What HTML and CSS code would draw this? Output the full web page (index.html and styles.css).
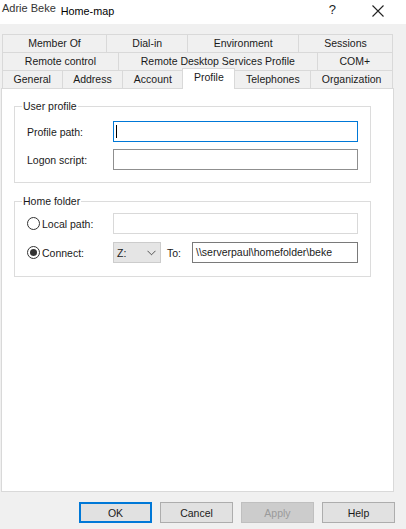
FILE: index.html
```html
<!DOCTYPE html>
<html lang="en">
<head>
<meta charset="utf-8">
<title>Adrie Beke Properties</title>
<link rel="stylesheet" href="styles.css">
</head>
<body>
<div class="window">
  <header class="titlebar">
    <div class="title"><span class="title-old">Adrie Beke</span><span class="title-new">Home-map</span></div>
    <div class="caption-btns">
      <span class="help-btn">?</span>
      <span class="close-btn"><svg width="12" height="12" viewBox="0 0 12 12"><path d="M0.5 0.5L11.5 11.5M11.5 0.5L0.5 11.5" stroke="#222" stroke-width="1.1" fill="none"/></svg></span>
    </div>
  </header>
  <main class="dialog">
    <nav class="tabs">
      <div class="tab-row">
        <div class="tab">Member Of</div>
        <div class="tab">Dial-in</div>
        <div class="tab">Environment</div>
        <div class="tab">Sessions</div>
      </div>
      <div class="tab-row">
        <div class="tab">Remote control</div>
        <div class="tab">Remote Desktop Services Profile</div>
        <div class="tab">COM+</div>
      </div>
      <div class="tab-row">
        <div class="tab">General</div>
        <div class="tab">Address</div>
        <div class="tab">Account</div>
        <div class="tab selected">Profile</div>
        <div class="tab">Telephones</div>
        <div class="tab">Organization</div>
      </div>
    </nav>
    <section class="panel">
      <fieldset class="group group-profile">
        <legend>User profile</legend>
        <div class="form-grid">
          <label class="field-label">Profile path:</label>
          <div class="textbox focused"><span class="caret"></span></div>
          <label class="field-label">Logon script:</label>
          <div class="textbox"></div>
        </div>
      </fieldset>
      <fieldset class="group group-home">
        <legend>Home folder</legend>
        <div class="form-grid form-grid-home">
          <label class="field-label radio"><span class="radio-circle"></span>Local path:</label>
          <div class="textbox disabled"></div>
          <label class="field-label radio"><span class="radio-circle checked"></span>Connect:</label>
          <div class="connect-row">
            <div class="combo"><span>Z:</span><svg width="9" height="6" viewBox="0 0 9 6"><polyline points="0.5,0.8 4.5,4.8 8.5,0.8" fill="none" stroke="#555" stroke-width="1"/></svg></div>
            <span class="to-label">To:</span>
            <div class="textbox path">\\serverpaul\homefolder\beke</div>
          </div>
        </div>
      </fieldset>
    </section>
    <footer class="buttons">
      <button class="btn default">OK</button>
      <button class="btn">Cancel</button>
      <button class="btn" disabled>Apply</button>
      <button class="btn">Help</button>
    </footer>
  </main>
</div>
</body>
</html>
```

FILE: styles.css
```css
* { box-sizing: border-box; }

html, body {
  margin: 0;
  padding: 0;
}

body {
  width: 406px;
  height: 529px;
  overflow: hidden;
  background: #f0f0f0;
  font-family: "Liberation Sans", Arial, sans-serif;
  font-size: 10.5px;
  color: #1a1a1a;
}

.titlebar {
  height: 24px;
  background: #ffffff;
  display: flex;
  justify-content: space-between;
  align-items: flex-start;
}

.title {
  display: flex;
  align-items: flex-start;
  padding-left: 2px;
}

.title-old {
  font-size: 11px;
  line-height: 13px;
  padding-top: 2px;
  color: #333;
}

.title-new {
  font-size: 10.8px;
  line-height: 13px;
  padding-top: 5px;
  margin-left: 5px;
  color: #000;
}

.caption-btns {
  display: flex;
  align-items: flex-start;
  padding-top: 3px;
  padding-right: 22px;
}

.help-btn {
  font-size: 13px;
  line-height: 13px;
  color: #222;
  margin-right: 36px;
}

.close-btn {
  display: flex;
  padding-top: 2px;
}

.dialog {
  padding: 10px 12px 0 1px;
}

.tabs {
  margin: 0 1px 0 1px;
}

.tab-row {
  display: flex;
  height: 18px;
}

.tab {
  flex: 1 1 auto;
  height: 18px;
  border-top: 1px solid #d9d9d9;
  border-left: 1px solid #d9d9d9;
  text-align: center;
  line-height: 16px;
  white-space: nowrap;
  background: #f0f0f0;
}

.tab:last-child {
  border-right: 1px solid #d9d9d9;
}

.tab.selected {
  position: relative;
  z-index: 1;
  height: 21px;
  margin-top: -2px;
  margin-bottom: -1px;
  background: #ffffff;
  border-right: 1px solid #d9d9d9;
  margin-right: -1px;
}

.panel {
  height: 404px;
  background: #ffffff;
  border: 1px solid #d9d9d9;
  padding: 11px 22px 0 12px;
}

.group {
  margin: 0;
  border: 1px solid #dcdcdc;
  padding: 9px 12px 12px 12px;
  min-width: 0;
}

.group legend {
  padding: 0 1px;
  margin-left: -5px;
  line-height: 12px;
}

.group-home {
  margin-top: 12px;
  padding-top: 6px;
  padding-bottom: 13px;
}

.form-grid {
  display: grid;
  grid-template-columns: 86px 1fr;
  row-gap: 7px;
  align-items: center;
}

.form-grid-home {
  row-gap: 8px;
}

.field-label {
  line-height: 12px;
}

.textbox {
  height: 21px;
  background: #ffffff;
  border: 1px solid #8f8f8f;
  padding: 0 3px;
  line-height: 19px;
  white-space: nowrap;
}

.textbox.focused {
  border-color: #0078d7;
  display: flex;
  align-items: center;
  padding-left: 2px;
}

.caret {
  width: 1px;
  height: 13px;
  background: #000;
}

.textbox.disabled {
  border-color: #d9d9d9;
}

.radio {
  display: flex;
  align-items: center;
}

.radio-circle {
  width: 13px;
  height: 13px;
  border-radius: 50%;
  border: 1px solid #333;
  background: #fff;
  margin-right: 2px;
  display: flex;
  align-items: center;
  justify-content: center;
}

.radio-circle.checked::after {
  content: "";
  width: 7px;
  height: 7px;
  border-radius: 50%;
  background: #333;
}

.connect-row {
  display: flex;
  align-items: center;
}

.combo {
  width: 48px;
  height: 21px;
  background: #e5e5e5;
  border: 1px solid #cccccc;
  display: flex;
  align-items: center;
  justify-content: space-between;
  padding: 0 4px 0 3px;
}

.to-label {
  margin-left: 6px;
  width: 25px;
}

.textbox.path {
  flex: 1 1 auto;
  border-color: #7a7a7a;
}

.buttons {
  display: flex;
  justify-content: flex-end;
  gap: 8px;
  margin-top: 10px;
  margin-right: -1px;
}

.btn {
  width: 73px;
  height: 21px;
  font-family: inherit;
  font-size: 10.5px;
  color: #1a1a1a;
  background: #e1e1e1;
  border: 1px solid #adadad;
  padding: 0;
  margin: 0;
}

.btn.default {
  border: 2px solid #0078d7;
}

.btn:disabled {
  background: #cccccc;
  border-color: #bfbfbf;
  color: #9a9a9a;
}
```
